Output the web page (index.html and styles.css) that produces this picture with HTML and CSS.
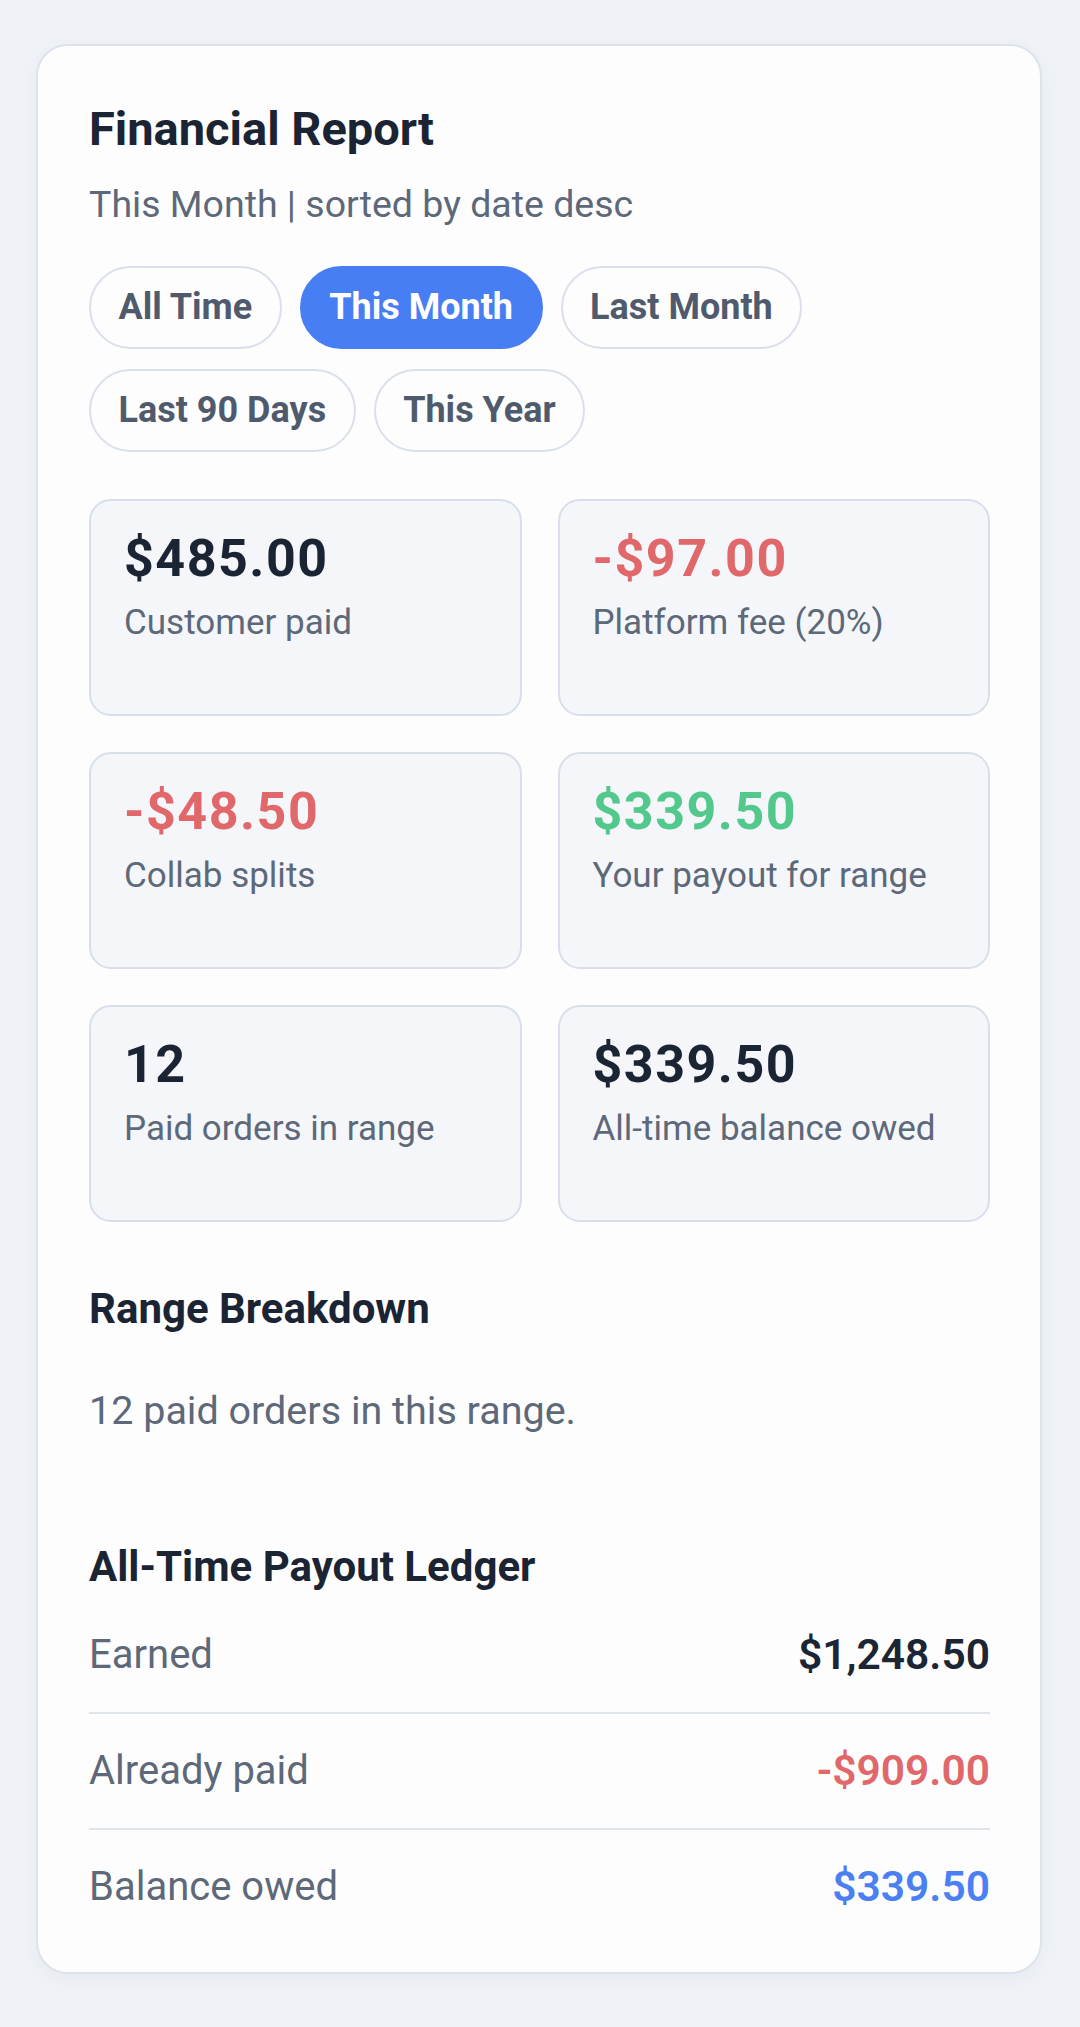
FILE: index.html
```html
<!DOCTYPE html>
<html lang="en">
<head>
<meta charset="utf-8">
<title>Financial Report</title>
<link rel="stylesheet" href="styles.css">
</head>
<body>
<main class="page">
  <section class="report">
    <h1 class="report-title">Financial Report</h1>
    <p class="report-sub">This Month | sorted by date desc</p>

    <div class="ranges">
      <button class="chip">All Time</button>
      <button class="chip chip-active">This Month</button>
      <button class="chip">Last Month</button>
      <button class="chip">Last 90 Days</button>
      <button class="chip">This Year</button>
    </div>

    <div class="stats">
      <div class="stat">
        <div class="stat-value">$485.00</div>
        <div class="stat-label">Customer paid</div>
      </div>
      <div class="stat">
        <div class="stat-value neg">-$97.00</div>
        <div class="stat-label">Platform fee (20%)</div>
      </div>
      <div class="stat">
        <div class="stat-value neg">-$48.50</div>
        <div class="stat-label">Collab splits</div>
      </div>
      <div class="stat">
        <div class="stat-value pos">$339.50</div>
        <div class="stat-label">Your payout for range</div>
      </div>
      <div class="stat">
        <div class="stat-value">12</div>
        <div class="stat-label">Paid orders in range</div>
      </div>
      <div class="stat">
        <div class="stat-value">$339.50</div>
        <div class="stat-label">All-time balance owed</div>
      </div>
    </div>

    <h2 class="section-title breakdown-title">Range Breakdown</h2>
    <p class="section-text">12 paid orders in this range.</p>

    <h2 class="section-title ledger-title">All-Time Payout Ledger</h2>
    <div class="ledger">
      <div class="ledger-row">
        <span class="ledger-label">Earned</span>
        <span class="ledger-value">$1,248.50</span>
      </div>
      <div class="ledger-row">
        <span class="ledger-label">Already paid</span>
        <span class="ledger-value neg">-$909.00</span>
      </div>
      <div class="ledger-row">
        <span class="ledger-label">Balance owed</span>
        <span class="ledger-value owed">$339.50</span>
      </div>
    </div>
  </section>
</main>
</body>
</html>
```

FILE: styles.css
```css
* {
  box-sizing: border-box;
}

html,
body {
  margin: 0;
  padding: 0;
}

body {
  background: #eff2f6;
  font-family: Roboto, "Noto Sans", "Liberation Sans", sans-serif;
  color: #1c2533;
}

.page {
  padding: 44px 38px 55px 36px;
}

.report {
  background: #fdfdfe;
  border: 2px solid #dde3ec;
  border-radius: 32px;
  padding: 55px 50px 28px 51px;
  box-shadow: 0 6px 24px rgba(30, 45, 70, 0.04);
}

.report-title {
  margin: 0;
  font-size: 47px;
  line-height: 56px;
  font-weight: 700;
  color: #1b2433;
}

.report-sub {
  margin: 25px 0 0;
  font-size: 37.5px;
  line-height: 44px;
  color: #5d6879;
}

/* date range filter pills */
.ranges {
  display: flex;
  flex-wrap: wrap;
  gap: 20px 18px;
  margin-top: 40px;
}

.chip {
  font-family: inherit;
  font-size: 36px;
  line-height: 43px;
  font-weight: 700;
  color: #4f5b6d;
  background: #fdfdfe;
  border: 2px solid #d9e0ea;
  border-radius: 999px;
  padding: 18px 27.5px;
  cursor: pointer;
}

.chip-active {
  background: #487ef4;
  border-color: #487ef4;
  color: #ffffff;
}

/* summary tiles */
.stats {
  display: grid;
  grid-template-columns: 1fr 1fr;
  gap: 36px;
  margin-top: 47px;
}

.stat {
  background: #f4f6fa;
  border: 2px solid #d8dfea;
  border-radius: 22px;
  padding: 27px 33px;
  min-height: 217px;
}

.stat-value {
  font-size: 52px;
  line-height: 62px;
  font-weight: 700;
  letter-spacing: 1.5px;
  color: #1b2433;
}

.stat-label {
  margin-top: 12px;
  font-size: 35px;
  line-height: 42px;
  color: #5d6879;
}

.neg {
  color: #e0686b;
}

.pos {
  color: #52c88c;
}

.owed {
  color: #4a80f2;
}

.section-title {
  margin: 0;
  font-size: 42px;
  line-height: 50px;
  font-weight: 700;
  color: #1b2433;
}

.breakdown-title {
  margin-top: 62px;
}

.section-text {
  margin: 54px 0 0;
  font-size: 39.5px;
  line-height: 46px;
  color: #5d6879;
}

.ledger-title {
  margin-top: 108px;
}

.ledger {
  margin-top: 6px;
}

.ledger-row {
  display: flex;
  align-items: center;
  justify-content: space-between;
  padding: 31px 0;
}

.ledger-row + .ledger-row {
  border-top: 2px solid #dfe4ec;
}

.ledger-label {
  font-size: 40px;
  line-height: 52px;
  color: #5d6879;
}

.ledger-value {
  font-size: 42.5px;
  line-height: 52px;
  font-weight: 600;
}
```
